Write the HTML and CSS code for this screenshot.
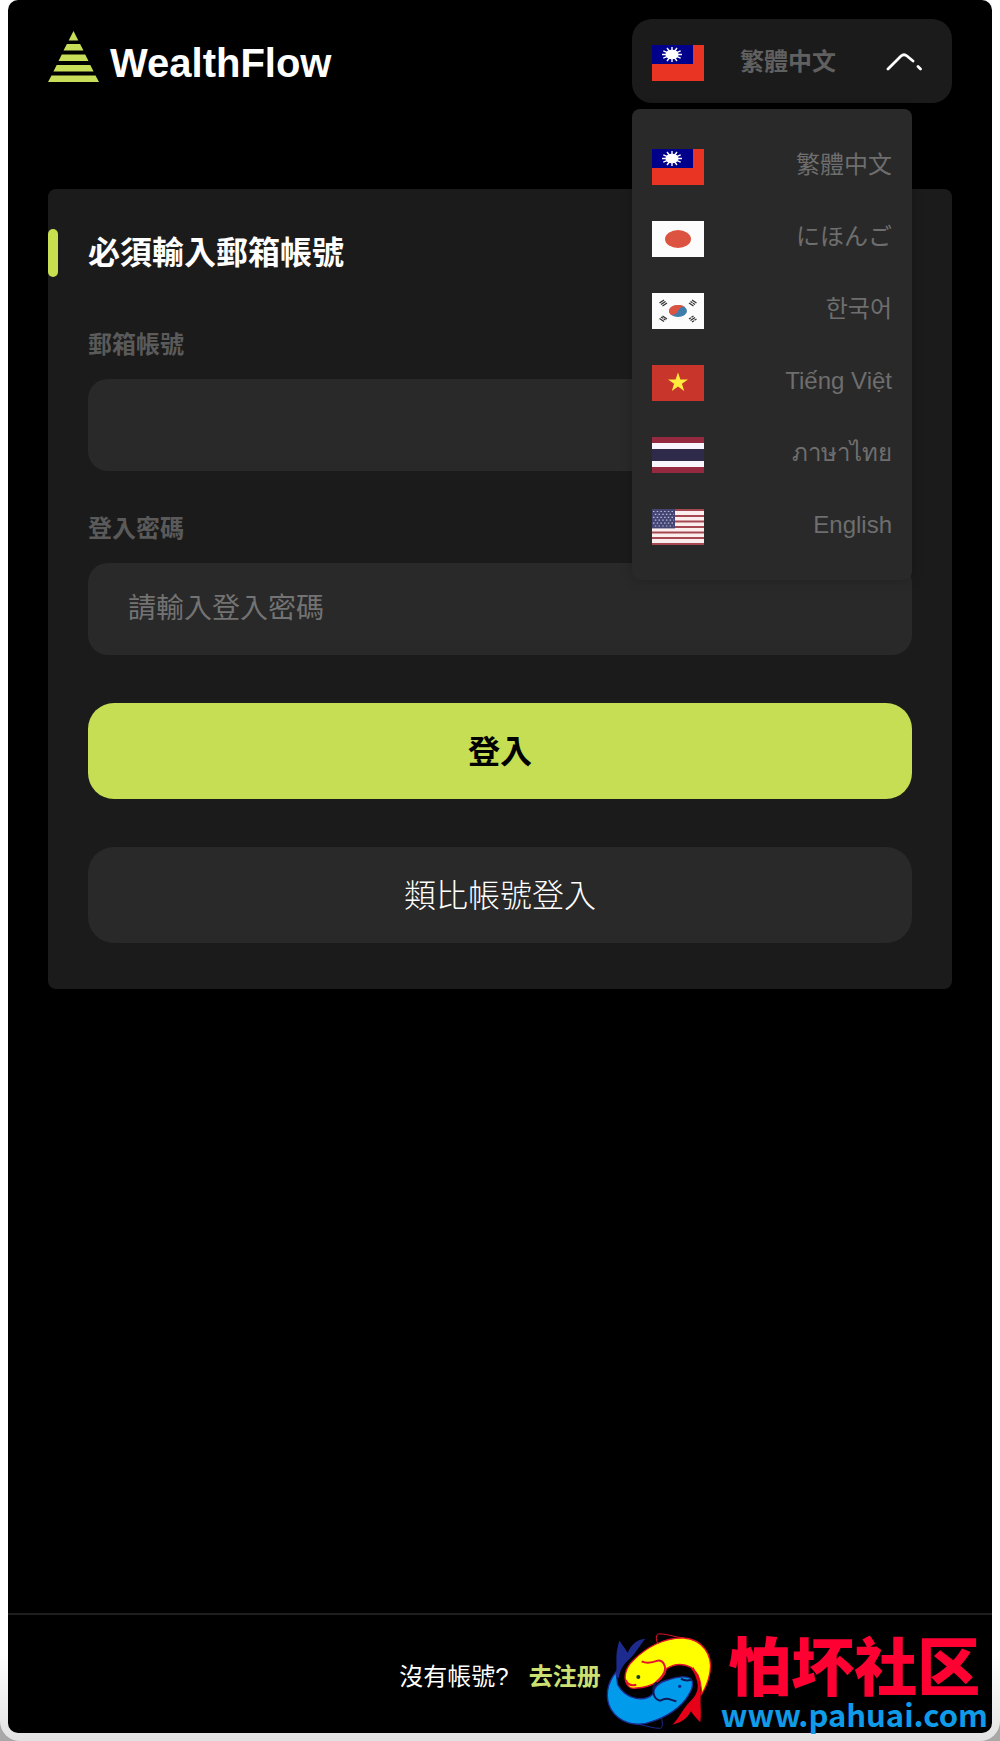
FILE: index.html
```html
<!DOCTYPE html>
<html lang="zh-Hant">
<head>
<meta charset="utf-8">
<meta name="viewport" content="width=device-width, initial-scale=1">
<title>WealthFlow</title>
<link rel="stylesheet" href="styles.css">
</head>
<body>
<svg class="sprite" aria-hidden="true">
  <symbol id="flag-tw" viewBox="0 0 52 36" preserveAspectRatio="none">
    <rect width="52" height="36" fill="#e93323"/>
    <rect width="41" height="19" fill="#00008b"/>
    <path stroke="#fff" stroke-width="1.400" d="M20 2v15M10 9.500h20M15 3l10 13M25 3L15 16M11.300 5.800l17.400 7.400M28.700 5.800l-17.400 7.400"/>
    <ellipse cx="20" cy="9.500" rx="6.500" ry="4.800" fill="#fff"/>
  </symbol>
  <symbol id="flag-jp" viewBox="0 0 52 36" preserveAspectRatio="none">
    <rect width="52" height="36" fill="#fcfcfc"/>
    <ellipse cx="26" cy="18" rx="13" ry="9" fill="#dc5341"/>
  </symbol>
  <symbol id="flag-kr" viewBox="0 0 52 36" preserveAspectRatio="none">
    <rect width="52" height="36" fill="#fcfcfc"/>
    <ellipse cx="26" cy="18" rx="9" ry="6" fill="#3f7cab"/>
    <path d="M18.500 21.500A9 6 0 0 1 33.500 14.500C31 12.500 27.500 14.500 26 18S20.500 22.500 18.500 21.500z" fill="#dc5341"/>
    <g stroke="#333" stroke-width="1.300" fill="none">
      <path d="M7.500 10l4.500-3M9 11.500l4.500-3M10.500 13l4.500-3"/>
      <path d="M37 10l4.500 3M38.500 8.500l2 1.300M41 10.200l2 1.300M40 7l4.500 3"/>
      <path d="M7.500 25.500l4.500 3M9 24l2 1.300M11.500 25.700l2 1.300M10.500 23l4.500 3"/>
      <path d="M37 26l2-1.300M39.500 24.300l2-1.300M38.500 27.500l4.500-3M40 29l2-1.300M42.500 27.300l2-1.300"/>
    </g>
  </symbol>
  <symbol id="flag-vn" viewBox="0 0 52 36" preserveAspectRatio="none">
    <rect width="52" height="36" fill="#c8362b"/>
    <path fill="#ffec3d" d="M26 7.500l2.400 7h7.600l-6.100 4.300 2.300 7.200-6.200-4.400-6.200 4.400 2.300-7.200L16 14.500h7.600z"/>
  </symbol>
  <symbol id="flag-th" viewBox="0 0 52 36" preserveAspectRatio="none">
    <rect width="52" height="36" fill="#94293f"/>
    <rect y="6" width="52" height="24" fill="#f8f5fc"/>
    <rect y="12" width="52" height="12" fill="#2d2a4a"/>
  </symbol>
  <symbol id="flag-us" viewBox="0 0 52 36" preserveAspectRatio="none">
    <rect width="52" height="36" fill="#fbeeee"/>
    <path stroke="#a54852" stroke-width="2" d="M0 1h52M0 6.900h52M0 12.400h52M0 18h52M0 23.500h52M0 29.100h52M0 35h52"/>
    <rect width="23" height="19.400" fill="#454574"/>
    <path stroke="#b9b9d6" stroke-width="1.200" stroke-dasharray="1.500 2.200" d="M1 2.500h21M2.800 5.400h19M1 8.300h21M2.800 11.200h19M1 14.100h21M2.800 17h19"/>
  </symbol>
</svg>

<div class="app">
  <header class="header">
    <a class="brand" href="#">
      <svg class="brand-mark" viewBox="0 0 51 51" aria-hidden="true">
        <path fill="#c8de58" d="M25.500 0L30.300 9.500H20.700zM18.900 13H32.100L35.500 19.500H15.500zM13.800 23.500H37.200L40.500 30H10.500zM8.700 34H42.300L45.600 40.500H5.400zM3.500 44.500H47.500L51 51H0z"/>
      </svg>
      <span>WealthFlow</span>
    </a>
    <div class="lang">
      <button class="lang-toggle" type="button" aria-haspopup="true" aria-expanded="true">
        <svg class="flag" aria-hidden="true"><use href="#flag-tw"/></svg>
        <span class="lang-current">繁體中文</span>
        <svg class="chevron" viewBox="0 0 36 20" aria-hidden="true">
          <path d="M2 18L15 5Q18 2.500 21 5L27 10M32 15.500L34.500 18" fill="none" stroke="#fff" stroke-width="2.800" stroke-linecap="round"/>
        </svg>
      </button>
      <ul class="lang-menu">
        <li><button type="button"><svg class="flag" aria-hidden="true"><use href="#flag-tw"/></svg><span>繁體中文</span></button></li>
        <li><button type="button" lang="ja"><svg class="flag" aria-hidden="true"><use href="#flag-jp"/></svg><span>にほんご</span></button></li>
        <li><button type="button" lang="ko"><svg class="flag" aria-hidden="true"><use href="#flag-kr"/></svg><span>한국어</span></button></li>
        <li><button type="button" lang="vi"><svg class="flag" aria-hidden="true"><use href="#flag-vn"/></svg><span>Tiếng Việt</span></button></li>
        <li><button type="button" lang="th"><svg class="flag" aria-hidden="true"><use href="#flag-th"/></svg><span>ภาษาไทย</span></button></li>
        <li><button type="button" lang="en"><svg class="flag" aria-hidden="true"><use href="#flag-us"/></svg><span>English</span></button></li>
      </ul>
    </div>
  </header>

  <main class="main">
    <form class="card">
      <h1 class="card-title">必須輸入郵箱帳號</h1>
      <div class="field">
        <label for="email">郵箱帳號</label>
        <input id="email" type="email">
      </div>
      <div class="field">
        <label for="password">登入密碼</label>
        <input id="password" type="password" placeholder="請輸入登入密碼">
      </div>
      <div class="actions">
        <button class="btn btn-primary" type="submit">登入</button>
        <button class="btn btn-demo" type="button">類比帳號登入</button>
      </div>
    </form>
  </main>

  <footer class="footer">
    <span>沒有帳號?</span>
    <a href="#">去注册</a>
  </footer>
</div>

<div class="watermark" lang="zh-Hans">
  <svg class="fish" viewBox="0 0 360 345" aria-hidden="true">
    <path fill="#1d2b8f" d="M62 62C72 78 80 88 86 98C96 74 114 58 139 56C122 76 112 98 92 116C70 136 62 152 60 175L50 168C56 140 48 112 56 82C57 74 59 68 62 62z"/>
    <path fill="none" stroke="#e3142b" stroke-width="3" d="M178 76C172 62 168 46 178 42C200 40 222 50 254 54"/>
    <path fill="none" stroke="#1d2b8f" stroke-width="3" d="M186 288C190 304 194 322 184 325C164 326 148 318 122 314"/>
    <path fill="#ff0" stroke="#e3142b" stroke-width="4" d="M88 198C70 178 78 144 104 120C142 82 196 52 254 54C310 58 342 104 333 156C328 186 318 206 308 222C306 190 302 160 276 142C246 126 222 134 202 146C196 178 160 202 112 204C102 206 92 204 88 198z"/>
    <path fill="#009bea" stroke="#1d2b8f" stroke-width="4" d="M51 156C24 190 16 232 36 268C60 308 112 324 160 304C200 292 246 264 268 226C282 206 286 184 272 174C252 166 230 172 206 180C184 186 164 200 162 222C140 244 84 244 56 194z"/>
    <path fill="#e60018" d="M284 142L290 158L298 164L306 220C302 248 308 274 304 307C292 296 284 286 276 274C264 296 246 308 220 314C240 296 250 268 272 246C294 224 302 204 292 176C288 160 280 150 276 146z"/>
    <path fill="none" stroke="#e3142b" stroke-width="6" d="M128 124C144 132 160 128 176 122C192 120 200 136 198 150C196 166 184 176 172 186M80 180C86 194 98 198 112 194"/>
    <path fill="none" stroke="#111b58" stroke-width="6" d="M172 186C156 206 162 238 184 242C206 230 212 240 232 244M246 176C258 184 266 182 276 180"/>
    <circle cx="118" cy="171" r="6" fill="#173a22"/>
    <circle cx="242" cy="199" r="5" fill="#152a8a"/>
  </svg>
  <div class="watermark-text">
    <strong>怕坏社区</strong>
    <span>www.pahuai.com</span>
  </div>
</div>
</body>
</html>
```
FILE: styles.css
```css
* {
  box-sizing: border-box;
}

html {
  background: #a8a8a8;
}

body {
  position: relative;
  margin: 0;
  min-height: 100vh;
  padding: 0 8px 8px;
  border-radius: 0 0 20px 20px;
  background: linear-gradient(#fff 95%, #e2e2e2);
  font-family: "Liberation Sans", "Noto Sans CJK TC", sans-serif;
  font-size: 24px;
  color: #fff;
  display: flex;
}

button,
input {
  font: inherit;
  color: inherit;
  border: 0;
}

button {
  cursor: pointer;
}

.sprite {
  position: absolute;
  width: 0;
  height: 0;
}

.app {
  flex: 1;
  min-width: 0;
  display: flex;
  flex-direction: column;
  background: #000;
  border-radius: 10px;
}

.header {
  display: flex;
  justify-content: space-between;
  align-items: flex-start;
  padding: 19px 40px 0;
}

.brand {
  display: flex;
  align-items: center;
  gap: 11px;
  padding-top: 10px;
  font-size: 40px;
  font-weight: 700;
  color: #fff;
  text-decoration: none;
}

.brand span {
  padding-top: 14px;
  line-height: 40px;
}

.brand-mark {
  width: 51px;
  height: 51px;
}

.lang {
  position: relative;
  width: 320px;
}

.lang-toggle {
  display: flex;
  align-items: center;
  width: 100%;
  height: 84px;
  padding: 0 30px 0 20px;
  border-radius: 20px;
  background: #1b1b1b;
  color: #606060;
}

.flag {
  flex: none;
  width: 52px;
  height: 36px;
}

.lang-toggle .flag {
  margin-top: 4px;
}

.lang-current {
  flex: 1;
  padding: 0 14px 4px 0;
  text-align: center;
  font-weight: 700;
}

.chevron {
  width: 36px;
  height: 20px;
}

.lang-menu {
  position: absolute;
  z-index: 1;
  top: 90px;
  left: 0;
  width: 280px;
  margin: 0;
  padding: 22px 0 17px;
  list-style: none;
  border-radius: 8px;
  background: #292929;
  box-shadow: 0 0 12px rgba(0, 0, 0, 0.2);
}

.lang-menu button {
  display: flex;
  align-items: center;
  justify-content: space-between;
  width: 100%;
  height: 72px;
  padding: 0 20px;
  background: none;
  color: #6e6e6e;
}

.lang-menu span {
  line-height: 36px;
  padding-bottom: 4px;
}

.main {
  flex: 1;
  padding: 86px 40px 40px;
}

.card {
  display: flex;
  flex-direction: column;
  gap: 40px;
  padding: 40px 40px 46px;
  border-radius: 8px;
  background: #1b1b1b;
}

.card-title {
  display: flex;
  gap: 30px;
  margin: 0 0 10px -40px;
  font-size: 32px;
  line-height: 48px;
}

.card-title::before {
  content: "";
  width: 10px;
  border-radius: 5px;
  background: #c8e04f;
}

.field {
  display: flex;
  flex-direction: column;
  gap: 16px;
}

.field label {
  line-height: 36px;
  font-weight: 700;
  color: #5a5a5a;
}

.field input {
  width: 100%;
  height: 92px;
  padding: 0 40px;
  border-radius: 20px;
  background: #292929;
  font-size: 28px;
  outline: none;
}

.field input::placeholder {
  color: #737373;
  opacity: 1;
}

.actions {
  display: flex;
  flex-direction: column;
  gap: 48px;
  padding-top: 8px;
}

.btn {
  height: 96px;
  padding: 0 0 5px;
  border-radius: 26px;
  font-size: 32px;
}

.btn-primary {
  background: #c6de54;
  color: #000;
  font-weight: 700;
}

.btn-demo {
  background: #292929;
  color: #fff;
  font-family: "Noto Sans CJK TC", sans-serif;
  font-weight: 300;
}

.footer {
  display: flex;
  justify-content: center;
  align-items: center;
  gap: 20px;
  height: 120px;
  border-top: 2px solid #1e1e1e;
}

.footer a {
  color: #cbe070;
  font-weight: 700;
  text-decoration: none;
}

.watermark {
  position: absolute;
  right: 12px;
  bottom: 6px;
  display: flex;
  align-items: flex-end;
  gap: 2px;
  font-family: "Noto Sans CJK SC", sans-serif;
}

.fish {
  width: 120px;
  height: 115px;
}

.watermark-text {
  display: flex;
  flex-direction: column;
  align-items: center;
}

.watermark-text strong {
  font-size: 63px;
  font-weight: 900;
  line-height: 60px;
  color: #ff0033;
}

.watermark-text span {
  font-size: 31px;
  font-weight: 700;
  line-height: 42px;
  color: #0f9be8;
}
```
